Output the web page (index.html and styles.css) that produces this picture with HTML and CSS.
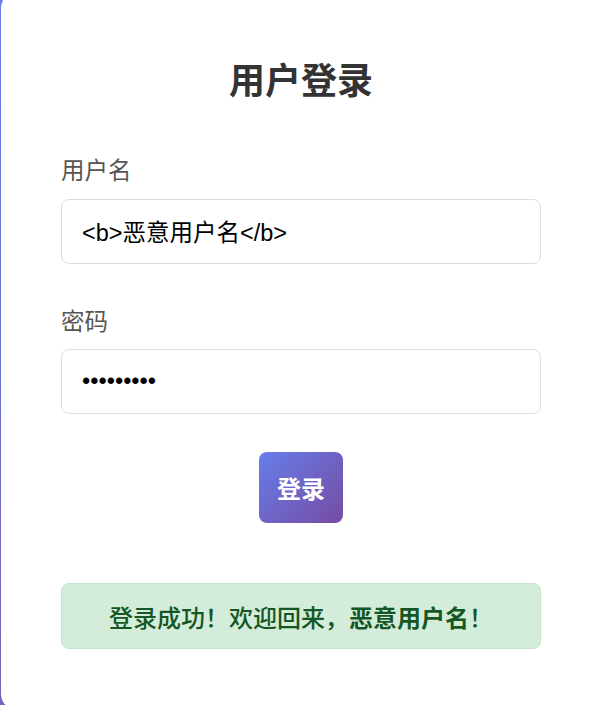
FILE: index.html
```html
<!DOCTYPE html>
<html lang="zh-CN">
<head>
<meta charset="UTF-8">
<title>用户登录</title>
<link rel="stylesheet" href="styles.css">
</head>
<body>
<div class="page">
  <div class="card">
    <h1 class="title">用户登录</h1>
    <form class="form">
      <div class="group">
        <label class="label" for="u">用户名</label>
        <input class="field" id="u" type="text" value="<b>恶意用户名</b>">
      </div>
      <div class="group">
        <label class="label" for="p">密码</label>
        <input class="field" id="p" type="password" value="123456789">
      </div>
      <div class="actions">
        <button class="btn" type="button">登录</button>
      </div>
    </form>
    <div class="message">登录成功！欢迎回来，<b>恶意用户名</b>！</div>
  </div>
</div>
</body>
</html>
```
FILE: styles.css
```css
html, body {
  margin: 0;
  padding: 0;
}
body {
  background: linear-gradient(135deg, #667eea 0%, #764ba2 100%);
  min-height: 100vh;
  overflow: hidden;
  font-family: "Liberation Sans", "Noto Sans CJK SC", sans-serif;
}
.page {
  padding-left: 1px;
}
.card {
  width: 600px;
  box-sizing: border-box;
  background: #fff;
  border-radius: 16px;
  margin-top: -8px;
  padding: 68px 60px 61px 60px;
}
.title {
  margin: 0 0 52px 0;
  text-align: center;
  font-size: 36px;
  line-height: 44px;
  font-weight: bold;
  color: #333;
}
.form {
  margin: 0;
}
.group {
  margin-bottom: 43px;
}
.group + .group {
  margin-bottom: 38px;
}
.label {
  display: block;
  font-size: 23.5px;
  line-height: 30px;
  color: #555;
  margin-bottom: 12.5px;
}
.field {
  display: block;
  width: 100%;
  box-sizing: border-box;
  height: 65px;
  padding: 0 20px;
  border: 1px solid #ddd;
  border-radius: 8px;
  font-family: "Liberation Sans", "Noto Sans CJK SC", sans-serif;
  font-size: 23.5px;
  color: #000;
  background: #fff;
  outline: none;
}
.actions {
  display: flex;
  justify-content: center;
}
.btn {
  width: 84px;
  height: 71px;
  padding: 0;
  border: none;
  border-radius: 8px;
  background: linear-gradient(135deg, #667eea 0%, #764ba2 100%);
  color: #fff;
  font-family: "Liberation Sans", "Noto Sans CJK SC", sans-serif;
  font-size: 24px;
  font-weight: bold;
  cursor: pointer;
}
.message {
  margin-top: 60px;
  height: 66px;
  box-sizing: border-box;
  display: flex;
  align-items: center;
  justify-content: center;
  background: #d4edda;
  border: 1px solid #c3e6cb;
  border-radius: 8px;
  color: #155724;
  font-size: 24px;
  font-weight: 500;
}
.message b {
  font-weight: bold;
}
```
